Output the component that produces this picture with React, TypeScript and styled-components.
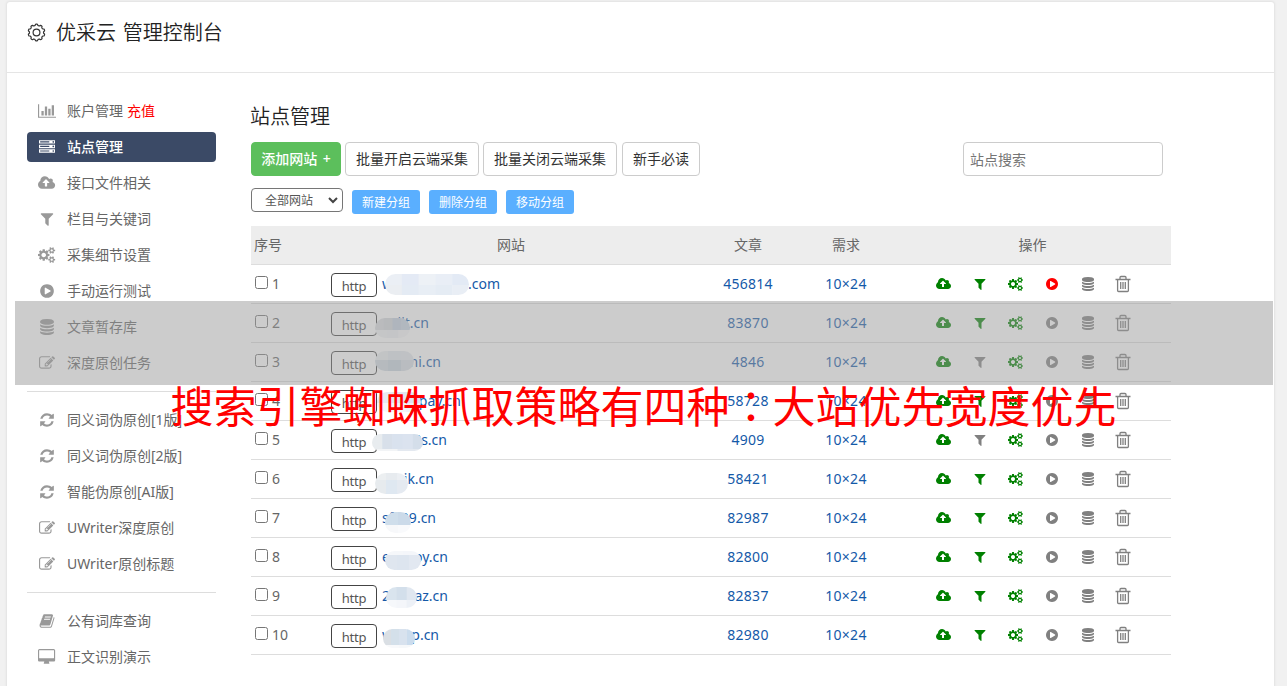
import React from 'react';
import styled, { createGlobalStyle } from 'styled-components';

const GlobalStyle = createGlobalStyle`
  * { box-sizing: border-box; }
  body {
    margin: 0;
    background: #f1f1f1;
    color: #666;
    font: 14px/20px 'Noto Sans', 'Noto Sans CJK SC', sans-serif;
    overflow: hidden;
  }
`;

const Page = styled.div`
  position: relative;
  height: 686px;
  padding: 2px 13px 0 7px;
  overflow: hidden;
`;
const Panel = styled.main`
  height: 700px;
  background: #fff;
  border-radius: 3px;
  box-shadow: 0 0 2px 1px #e2e2e2;
`;
const Header = styled.header`
  display: flex;
  align-items: center;
  gap: 10px;
  height: 71px;
  padding: 0 20px 9px;
  border-bottom: 1px solid #e5e5e5;
`;
const Title = styled.h1`
  margin: 1px 0 0;
  font-size: 20px;
  line-height: 28px;
  font-weight: 350;
  word-spacing: 1.5px;
  color: #222;
`;
const Body = styled.div`
  display: flex;
  gap: 35px;
  padding: 20px 20px 0;
`;
const Sidebar = styled.nav`
  width: 189px;
  padding-top: 3px;
`;
const NavItem = styled.a<{ $active?: boolean }>`
  display: flex;
  align-items: center;
  height: 30px;
  margin-bottom: 6px;
  border-radius: 4px;
  white-space: nowrap;
  color: ${p => (p.$active ? '#fff' : '#666')};
  background: ${p => (p.$active ? '#3b4a66' : 'transparent')};
  font-weight: ${p => (p.$active ? 500 : 400)};
  svg { color: ${p => (p.$active ? '#fff' : '#999')}; }
`;
const NavIcon = styled.span`
  display: flex;
  justify-content: center;
  width: 40px;
`;
const Recharge = styled.span`
  margin-left: 4px;
  color: #f00;
`;
const Divider = styled.hr`
  margin: 13px 0 13px;
  border: 0;
  border-top: 1px solid #ddd;
`;
const Content = styled.section`
  width: 920px;
`;
const Heading = styled.h2`
  margin: 9px 0 11px -1px;
  font-size: 20px;
  line-height: 29px;
  font-weight: 350;
  color: #222;
`;
const Toolbar = styled.div`
  display: flex;
  gap: 4px;
  padding-right: 8px;
`;
const Button = styled.button<{ $primary?: boolean; $w: number }>`
  width: ${p => p.$w}px;
  height: 34px;
  padding: 0;
  border: 1px solid ${p => (p.$primary ? '#5cbf5c' : '#ccc')};
  border-radius: 4px;
  background: ${p => (p.$primary ? '#5cbf5c' : '#fff')};
  color: ${p => (p.$primary ? '#fff' : '#333')};
  font: inherit;
  font-weight: ${p => (p.$primary ? 500 : 400)};
  word-spacing: 2px;
  white-space: nowrap;
  &:nth-of-type(4) { margin-left: 1px; }
`;
const Search = styled.input`
  width: 200px;
  height: 34px;
  margin-left: auto;
  padding: 0 6px;
  border: 1px solid #ccc;
  border-radius: 4px;
  font: inherit;
  &::placeholder { color: #757575; opacity: 1; }
`;
const Groups = styled.div`
  display: flex;
  align-items: flex-start;
  gap: 9px;
  height: 50px;
  padding-top: 12px;
`;
const GroupSelect = styled.div`
  display: flex;
  align-items: center;
  justify-content: space-between;
  width: 92px;
  height: 24px;
  padding: 1px 4px 0 13px;
  border: 1px solid #767676;
  border-radius: 4px;
  font-size: 12px;
  color: #555;
`;
const GroupButton = styled.button`
  width: 68px;
  height: 24px;
  margin-top: 2px;
  padding: 2px 0 0;
  border: 0;
  border-radius: 3px;
  background: #5aafff;
  color: #fff;
  font: inherit;
  font-size: 12px;
  font-weight: 400;
`;
const Row = styled.div<{ $head?: boolean }>`
  display: grid;
  grid-template-columns: 80px 360px 110px 90px 280px;
  height: 39px;
  align-items: center;
  border-bottom: 1px solid #ddd;
  background: ${p => (p.$head ? '#ededed' : 'transparent')};
  text-align: center;
`;
const HeadCell = styled.div<{ $first?: boolean }>`
  text-align: ${p => (p.$first ? 'left' : 'center')};
  padding-left: ${p => (p.$first ? 3 : 0)}px;
  &:nth-child(3) { padding-left: 4px; }
  &:nth-child(5) { padding-left: 3px; }
`;
const IndexCell = styled.label`
  display: flex;
  align-items: center;
  gap: 4px;
  padding-left: 4px;
`;
const Check = styled.input`
  width: 13px;
  height: 13px;
  margin: 0 0 3px;
`;
const SiteCell = styled.div`
  display: flex;
  align-items: center;
  gap: 5px;
`;
const Protocol = styled.span`
  width: 46px;
  height: 24px;
  margin-top: 2px;
  padding-top: 2px;
  border: 1px solid #444;
  border-radius: 4px;
  font-size: 13px;
  letter-spacing: -0.2px;
  color: #555;
`;
const Domain = styled.a<{ $w: number }>`
  position: relative;
  display: flex;
  justify-content: space-between;
  width: ${p => p.$w}px;
  color: #1459a8;
`;
const Smudge = styled.svg`
  position: absolute;
  left: -10px;
  top: -4px;
`;
const NumberCell = styled.div`
  color: #1459a8;
  letter-spacing: 0.25px;
  &:nth-child(3) { padding-left: 4px; }
`;
const Actions = styled.div`
  display: flex;
  padding-left: 34.5px;
`;
const Action = styled.span<{ $color: string }>`
  display: flex;
  align-items: center;
  justify-content: center;
  width: 36px;
  height: 20px;
  color: ${p => p.$color};
  &:last-child { width: 35px; }
`;
const Shade = styled.div`
  position: absolute;
  left: 15px;
  top: 301px;
  width: 1258px;
  height: 84px;
  background: rgba(153, 153, 153, 0.5);
`;
const Caption = styled.div`
  position: absolute;
  left: 0;
  right: 0;
  top: 373px;
  text-align: center;
  white-space: nowrap;
  color: #f00;
  font: 400 43px/62px 'Noto Sans CJK SC', sans-serif;
`;
const Colon = styled.span`
  font-family: 'Noto Sans CJK TC', sans-serif;
`;

const smallCog = 'v140q0 16-149 31-12 27-30 52 51 113 51 138 0 4-4 7-122 71-124 71-8 0-46-47t-52-68q-20 2-30 2t-30-2q-14 21-52 68t-46 47q-2 0-124-71-4-3-4-7 0-25 51-138-18-25-30-52-149-15-149-31v-140q0-16 149-31 13-29 30-52-51-113-51-138 0-4 4-7 4-2 35-20t59-34 30-16q8 0 46 46.5t52 67.5q20-2 30-2t30 2q51-71 92-112l6-2q4 0 124 70 4 3 4 7 0 25-51 138 17 23 30 52 149 15 149 31z';

const icons: Record<string, { w: number; x?: number; d: string }> = {
  chart: { w: 2048, d: 'M640 896v512h-256v-512h256zm384-512v1024h-256v-1024h256zm1024 1152v128h-2048v-1536h128v1408h1920zm-640-896v768h-256v-768h256zm384-384v1152h-256v-1152h256z' },
  server: { w: 1792, d: 'M128 1408h1024v-128h-1024v128zm0-512h1024v-128h-1024v128zm1568 448q0-40-28-68t-68-28-68 28-28 68 28 68 68 28 68-28 28-68zm-1568-960h1024v-128h-1024v128zm1568 448q0-40-28-68t-68-28-68 28-28 68 28 68 68 28 68-28 28-68zm0-512q0-40-28-68t-68-28-68 28-28 68 28 68 68 28 68-28 28-68zm96 832v384h-1792v-384h1792zm0-512v384h-1792v-384h1792zm0-512v384h-1792v-384h1792z' },
  cloud: { w: 1920, x: -64, d: 'M1216 864q0-14-9-23l-352-352q-9-9-23-9t-23 9l-351 351q-10 12-10 24 0 14 9 23t23 9h224v352q0 13 9.5 22.5t22.5 9.5h192q13 0 22.5-9.5t9.5-22.5v-352h224q13 0 22.5-9.5t9.5-22.5zm640 288q0 159-112.5 271.5t-271.5 112.5h-1088q-185 0-316.5-131.5t-131.5-316.5q0-130 70-240t188-165q-2-30-2-43 0-212 150-362t362-150q156 0 285.5 87t188.5 231q71-62 166-62 106 0 181 75t75 181q0 76-41 138 130 31 213.5 135.5t83.5 238.5z' },
  filter: { w: 1792, d: 'M1595 295q17 41-14 70l-493 493v742q0 42-39 59-13 5-25 5-27 0-45-19l-256-256q-19-19-19-45v-486l-493-493q-31-29-14-70 17-39 59-39h1280q42 0 59 39z' },
  cogs: { w: 1920, x: -64, d: 'M832 896q0-106-75-181t-181-75-181 75-75 181 75 181 181 75 181-75 75-181zm768 512q0-52-38-90t-90-38-90 38-38 90q0 53 37.5 90.5t90.5 37.5 90.5-37.5 37.5-90.5zm0-1024q0-52-38-90t-90-38-90 38-38 90q0 53 37.5 90.5t90.5 37.5 90.5-37.5 37.5-90.5zm-384 421v185q0 10-7 19.5t-16 10.5l-155 24q-11 35-32 76 34 48 90 115 7 11 7 20 0 12-7 19-23 30-82.5 89.5t-78.5 59.5q-11 0-21-7l-115-90q-37 19-77 31-11 108-23 155-7 24-30 24h-186q-11 0-20-7.5t-10-17.5l-23-153q-34-10-75-31l-118 89q-7 7-20 7-11 0-21-8-144-133-144-160 0-9 7-19 10-14 41-53t47-61q-23-44-35-82l-152-24q-10-1-17-9.5t-7-19.5v-185q0-10 7-19.5t16-10.5l155-24q11-35 32-76-34-48-90-115-7-11-7-20 0-12 7-20 22-30 82-89t79-59q11 0 21 7l115 90q34-18 77-32 11-108 23-154 7-24 30-24h186q11 0 20 7.5t10 17.5l23 153q34 10 75 31l118-89q8-7 20-7 11 0 21 8 144 133 144 160 0 8-7 19-12 16-42 54t-45 60q23 48 34 82l152 23q10 2 17 10.5t7 19.5zM1856 1338' + smallCog + 'M1856 314' + smallCog },
  play: { w: 1792, d: 'M896 128q209 0 385.5 103t279.5 279.5 103 385.5-103 385.5-279.5 279.5-385.5 103-385.5-103-279.5-279.5-103-385.5 103-385.5 279.5-279.5 385.5-103zm384 823q32-18 32-55t-32-55l-544-320q-31-19-64-1-32 19-32 56v640q0 37 32 56 16 8 32 8 17 0 32-9z' },
  database: { w: 1792, d: 'M896 768q237 0 443-43t325-127v170q0 69-103 128t-280 93.5-385 34.5-385-34.5-280-93.5-103-128v-170q119 84 325 127t443 43zm0 768q237 0 443-43t325-127v170q0 69-103 128t-280 93.5-385 34.5-385-34.5-280-93.5-103-128v-170q119 84 325 127t443 43zm0-384q237 0 443-43t325-127v170q0 69-103 128t-280 93.5-385 34.5-385-34.5-280-93.5-103-128v-170q119 84 325 127t443 43zm0-1152q208 0 385 34.5t280 93.5 103 128v128q0 69-103 128t-280 93.5-385 34.5-385-34.5-280-93.5-103-128v-128q0-69 103-128t280-93.5 385-34.5z' },
  edit: { w: 1792, d: 'M888 1184l116-116-152-152-116 116v56h96v96h56zm440-720q-16-16-33 1l-350 350q-17 17-1 33t33-1l350-350q17-17 1-33zm80 594v190q0 119-84.5 203.5t-203.5 84.5h-832q-119 0-203.5-84.5t-84.5-203.5v-832q0-119 84.5-203.5t203.5-84.5h832q63 0 117 25 15 7 18 23 3 17-9 29l-49 49q-14 14-32 8-23-6-45-6h-832q-66 0-113 47t-47 113v832q0 66 47 113t113 47h832q66 0 113-47t47-113v-126q0-13 9-22l64-64q15-15 35-7t20 29zm-96-738l288 288-672 672h-288v-288zm444 132l-92 92-288-288 92-92q28-28 68-28t68 28l152 152q28 28 28 68t-28 68z' },
  refresh: { w: 1792, d: 'M1639 1056q0 5-1 7-64 268-268 434.5t-478 166.5q-146 0-282.5-55t-243.5-157l-129 129q-19 19-45 19t-45-19-19-45v-448q0-26 19-45t45-19h448q26 0 45 19t19 45-19 45l-137 137q71 66 161 102t187 36q134 0 250-65t186-179q11-17 53-117 8-23 30-23h192q13 0 22.5 9.5t9.5 22.5zm25-800v448q0 26-19 45t-45 19h-448q-26 0-45-19t-19-45 19-45l138-138q-148-137-349-137-134 0-250 65t-186 179q-11 17-53 117-8 23-30 23h-199q-13 0-22.5-9.5t-9.5-22.5v-7q65-268 270-434.5t480-166.5q146 0 284 55.5t245 156.5l130-129q19-19 45-19t45 19 19 45z' },
  book: { w: 1792, d: 'M1703 478q40 57 18 129l-275 906q-19 64-76.5 107.5t-122.5 43.5h-923q-77 0-148.5-53.5t-99.5-131.5q-24-67-2-127 0-4 3-27t4-37q1-8-3-21.5t-3-19.5q2-11 8-21t16.5-23.5 16.5-23.5q23-38 45-91.5t30-91.5q3-10 .5-30t-.5-28q3-11 17-28t17-23q21-36 42-92t25-90q1-9-2.5-32t.5-28q4-13 22-30.5t22-22.5q19-26 42.5-84.5t27.5-96.5q1-8-3-25.5t-2-26.5q2-8 9-18t18-23 17-21q8-12 16.5-30.5t15-35 16-36 19.5-32 26.5-23.5 36-11.5 47.5 5.5l-1 3q38-9 51-9h761q74 0 114 56t18 130l-274 906q-36 119-71.5 153.5t-128.5 34.5h-869q-27 0-38 15-11 16-1 43 24 70 144 70h923q29 0 56-15.5t35-41.5l300-987q7-22 5-57 38 15 59 43zm-1064 2q-4 13 2 22.5t20 9.5h608q13 0 25.5-9.5t16.5-22.5l21-64q4-13-2-22.5t-20-9.5h-608q-13 0-25.5 9.5t-16.5 22.5zm-83 256q-4 13 2 22.5t20 9.5h608q13 0 25.5-9.5t16.5-22.5l21-64q4-13-2-22.5t-20-9.5h-608q-13 0-25.5 9.5t-16.5 22.5z' },
  desktop: { w: 1920, d: 'M1792 992v-832q0-13-9.5-22.5t-22.5-9.5h-1600q-13 0-22.5 9.5t-9.5 22.5v832q0 13 9.5 22.5t22.5 9.5h1600q13 0 22.5-9.5t9.5-22.5zm128-832v1088q0 66-47 113t-113 47h-544q0 37 16 77.5t32 71 16 43.5q0 26-19 45t-45 19h-512q-26 0-45-19t-19-45q0-14 16-44t32-70 16-78h-544q-66 0-113-47t-47-113v-1088q0-66 47-113t113-47h1600q66 0 113 47t47 113z' },
};

function Icon({ name, size }: { name: string; size: number }) {
  const i = icons[name];
  return (
    <svg width={(size * i.w) / 1792} height={size} viewBox={`${i.x ?? 0} 0 ${i.w} 1792`} fill="currentColor" fillRule={name === 'server' ? 'evenodd' : 'nonzero'}>
      <path d={i.d} />
    </svg>
  );
}

const Gear = () => {
  const points: string[] = [];
  for (let k = 0; k <= 120; k++) {
    const a = (k / 120) * Math.PI * 2;
    const wave = Math.max(-0.65, Math.min(0.65, 1.1 * Math.cos(a * 10)));
    const r = 7.7 + wave;
    points.push(`${(9.5 + r * Math.sin(a)).toFixed(2)} ${(9.5 - r * Math.cos(a)).toFixed(2)}`);
  }
  return (
    <svg width="19" height="19" viewBox="0 0 19 19" fill="none" stroke="#333" strokeWidth="1.2" strokeLinejoin="round">
      <path d={`M${points.join('L')}Z`} />
      <circle cx="9.5" cy="9.5" r="3.4" />
    </svg>
  );
};

const Trash = () => (
  <svg width="16" height="18" viewBox="0 0 16 18" fill="none" stroke="currentColor" strokeWidth="1.3">
    <path d="M.5 4.5h15M5 4V2.5q0-1 1-1h4q1 0 1 1V4M2.6 4.5v11q0 1 1 1h8.8q1 0 1-1v-11M5.7 7v7M8 7v7M10.3 7v7" />
  </svg>
);

type Nav = [string, string];
const navGroups: Nav[][] = [
  [['chart', '账户管理'], ['server', '站点管理'], ['cloud', '接口文件相关'], ['filter', '栏目与关键词'], ['cogs', '采集细节设置'], ['play', '手动运行测试'], ['database', '文章暂存库'], ['edit', '深度原创任务']],
  [['refresh', '同义词伪原创[1版]'], ['refresh', '同义词伪原创[2版]'], ['refresh', '智能伪原创[AI版]'], ['edit', 'UWriter深度原创'], ['edit', 'UWriter原创标题']],
  [['book', '公有词库查询'], ['desktop', '正文识别演示']],
];

// Each smudge is a top row of tones and, from `split` down, a second row.
interface Blob { x: number; y: number; w: number; h: number; split: number; top: string[]; low: string[] }
interface Site { pre: string; post: string; w: number; count: string; blob: Blob; filter?: boolean; running?: boolean }
const sites: Site[] = [
  { pre: 'w', post: '.com', w: 118, count: '456814', running: true, filter: true, blob: { x: 13, y: 4, w: 84, h: 21, split: 15, top: ['#ebeff5', '#e4eaf5', '#edf1f6', '#e9eef6', '#e3eaf5'], low: ['#ebeef2', '#e4ebf4', '#e8eef5', '#e5ecf4', '#e9eef5'] } },
  { pre: '', post: 'iit.cn', w: 47, count: '83870', filter: true, blob: { x: 3, y: 9, w: 35, h: 20, split: 21, top: ['#dadde0', '#d4d8dd', '#c4d0e1', '#c9d6e5'], low: ['#f1f3f5', '#eff1f5', '#f6f7f9'] } },
  { pre: '', post: 'ni.cn', w: 59, count: '4846', blob: { x: 3, y: 3, w: 39, h: 20, split: 12, top: ['#ebeef1', '#e2e8ee', '#e5e9ee'], low: ['#d2dbe3', '#c9d5df', '#d8dfe6'] } },
  { pre: '', post: 'pay.cn', w: 79, count: '58728', filter: true, blob: { x: 5, y: 5, w: 44, h: 20, split: 16, top: ['#e7e9f3', '#e2e6f1', '#dbe4f3'], low: ['#f5f6fa', '#f3f5f9', '#eef2f8'] } },
  { pre: '', post: '8s.cn', w: 65, count: '4909', blob: { x: 0, y: 8, w: 51, h: 17, split: 23, top: ['#e8ecef', '#d8e0ea', '#d9e2ee', '#dbe3ef', '#d4deea'], low: ['#f2f4f6', '#e4e9f0'] } },
  { pre: '', post: 'ik.cn', w: 52, count: '58421', filter: true, blob: { x: 3, y: 8, w: 33, h: 21, split: 15, top: ['#eceff1', '#e7ebef', '#eceff3'], low: ['#e7ebee', '#dfe8f1', '#e5eaf1'] } },
  { pre: 'sf', post: '39.cn', w: 54, count: '82987', filter: true, blob: { x: 13, y: 8, w: 26, h: 21, split: 21, top: ['#cfdeeb', '#cbdae9'], low: ['#f7f8fa', '#f9fafc'] } },
  { pre: 'e', post: 'oy.cn', w: 66, count: '82800', filter: true, blob: { x: 13, y: 8, w: 36, h: 19, split: 12, top: ['#f5f7fa', '#f4f6fa'], low: ['#dfe6ef', '#dde5ef', '#e2e8f1'] } },
  { pre: '2', post: 'az.cn', w: 66, count: '82837', filter: true, blob: { x: 14, y: 5, w: 31, h: 21, split: 18, top: ['#d9e4ee', '#d3dfeb', '#e0e7f0'], low: ['#f6f8fb', '#f4f6fa', '#edf1f7'] } },
  { pre: 'w', post: 'p.cn', w: 57, count: '82980', filter: true, blob: { x: 11, y: 8, w: 32, h: 19, split: 24, top: ['#dadfe4', '#d4e0ea', '#d8e2ee', '#cbdced'], low: ['#f8f9fb', '#f6f8fa'] } },
];

function Mosaic({ blob, id }: { blob: Blob; id: number }) {
  const { x, y, w, h, split, top, low } = blob;
  const band = (tones: string[], from: number, to: number) =>
    tones.map((tone, k) => (
      <rect key={`${from}-${k}`} x={x + (k * w) / tones.length} y={from} width={w / tones.length + 0.5} height={to - from} fill={tone} />
    ));
  return (
    <Smudge width="110" height="32">
      <clipPath id={`blob${id}`}><rect x={x} y={y} width={w} height={h} rx={h / 2} /></clipPath>
      <g clipPath={`url(#blob${id})`}>
        {band(top, y, split)}
        {band(low, split, y + h)}
      </g>
    </Smudge>
  );
}

export default function App() {
  return (
    <Page>
      <GlobalStyle />
      <Panel>
        <Header><Gear /><Title>优采云 管理控制台</Title></Header>
        <Body>
          <Sidebar>
            {navGroups.map((group, g) => (
              <React.Fragment key={g}>
                {g > 0 && <Divider />}
                {group.map(([icon, label]) => (
                  <NavItem key={label} $active={label === '站点管理'}>
                    <NavIcon><Icon name={icon} size={16} /></NavIcon>
                    {label}
                    {icon === 'chart' && <Recharge>充值</Recharge>}
                  </NavItem>
                ))}
              </React.Fragment>
            ))}
          </Sidebar>
          <Content>
            <Heading>站点管理</Heading>
            <Toolbar>
              <Button $primary $w={90}>添加网站 +</Button>
              <Button $w={134}>批量开启云端采集</Button>
              <Button $w={134}>批量关闭云端采集</Button>
              <Button $w={78}>新手必读</Button>
              <Search placeholder="站点搜索" />
            </Toolbar>
            <Groups>
              <GroupSelect>
                全部网站
                <svg width="10" height="7" viewBox="0 0 10 7" fill="none" stroke="#444" strokeWidth="2"><path d="M1 1l4 4 4-4" /></svg>
              </GroupSelect>
              <GroupButton>新建分组</GroupButton>
              <GroupButton>删除分组</GroupButton>
              <GroupButton>移动分组</GroupButton>
            </Groups>
            <Row $head>
              <HeadCell $first>序号</HeadCell>
              <HeadCell>网站</HeadCell>
              <HeadCell>文章</HeadCell>
              <HeadCell>需求</HeadCell>
              <HeadCell>操作</HeadCell>
            </Row>
            {sites.map((s, k) => (
              <Row key={k}>
                <IndexCell><Check type="checkbox" />{k + 1}</IndexCell>
                <SiteCell>
                  <Protocol>http</Protocol>
                  <Domain $w={s.w}><span>{s.pre}</span><span>{s.post}</span><Mosaic blob={s.blob} id={k} /></Domain>
                </SiteCell>
                <NumberCell>{s.count}</NumberCell>
                <NumberCell>10×24</NumberCell>
                <Actions>
                  <Action $color="#008000"><Icon name="cloud" size={14} /></Action>
                  <Action $color={s.filter ? '#008000' : '#808080'}><Icon name="filter" size={14} /></Action>
                  <Action $color="#008000"><Icon name="cogs" size={14} /></Action>
                  <Action $color={s.running ? '#f00' : '#808080'}><Icon name="play" size={14} /></Action>
                  <Action $color="#808080"><Icon name="database" size={14} /></Action>
                  <Action $color="#808080"><Trash /></Action>
                </Actions>
              </Row>
            ))}
          </Content>
        </Body>
      </Panel>
      <Shade />
      <Caption>搜索引擎蜘蛛抓取策略有四种<Colon>：</Colon>大站优先宽度优先</Caption>
    </Page>
  );
}
